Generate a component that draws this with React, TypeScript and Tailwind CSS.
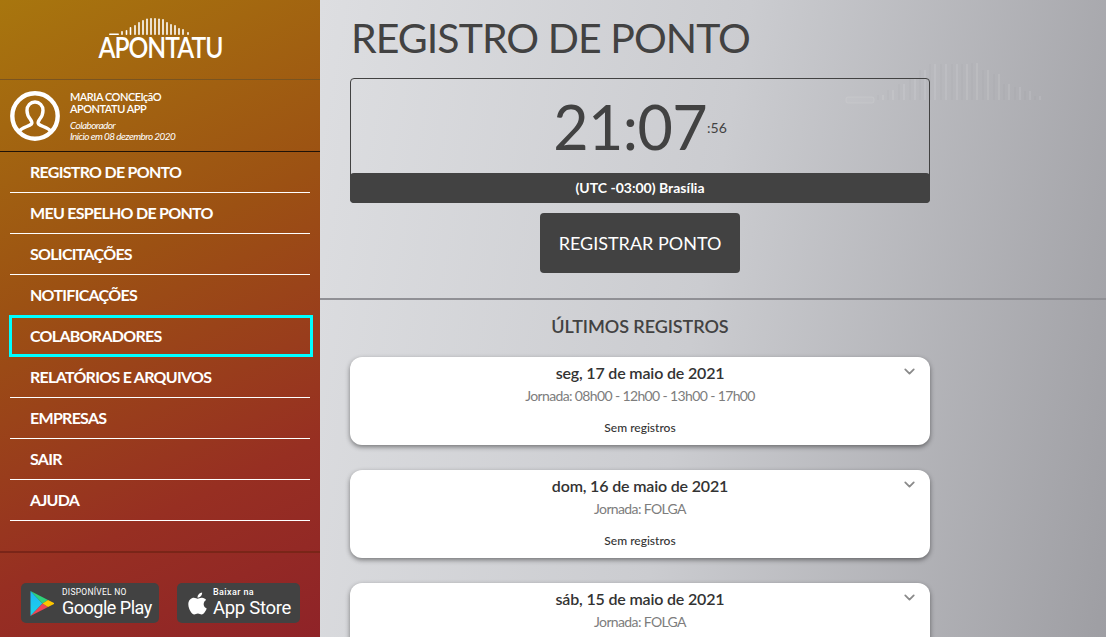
import { ChevronDown } from "lucide-react";
import { FaApple } from "react-icons/fa";

const bars: [number, number][] = [
  [121, 31],[125.5, 30],[129.5, 27],[134, 25],[138, 22],[142, 20],[146, 18.5],[150, 18],[154, 18],[158, 18.5],[162, 19],[166, 22],[170, 24],[174, 25],[178, 28],[182, 29],[187, 32],
];

const wm: [number, number][] = [
  [881, 92],[891, 87],[902, 81],[913, 76],[923, 67],[933, 61],[944, 61],[955, 61],[965, 61],[975, 60],[986, 67],[997, 71],[1007, 81],[1018, 84],[1028, 88],[1038, 93],
];

function LogoBars({ className }: { className?: string }) {
  return (
    <svg viewBox="108 17 81 19" className={className} fill="none">
      <rect x="108" y="33.5" width="10" height="1.6" rx="0.8" fill="currentColor" />
      {bars.map(([x, t]) => (
        <rect key={x} x={x - 0.8} y={t} width="1.6" height={35 - t} rx="0.8" fill="currentColor" />
      ))}
    </svg>
  );
}

function Watermark() {
  return (
    <svg viewBox="840 55 210 55" className="absolute left-[520px] top-[55px] h-[55px] w-[210px] pointer-events-none" fill="none">
      <rect x="846" y="97" width="28" height="6" rx="2" fill="#ffffff" fillOpacity="0.04" stroke="#ffffff" strokeOpacity="0.1" />
      {wm.map(([x, t]) => (
        <g key={x}>
          <path d={`M${x - 3} ${t + 3} V${100}`} stroke="#000000" strokeOpacity="0.025" strokeWidth="1" />
          <path d={`M${x + 2} ${t + 3} V${100}`} stroke="#ffffff" strokeOpacity="0.16" strokeWidth="1.2" />
        </g>
      ))}
    </svg>
  );
}

const nav = ["REGISTRO DE PONTO","MEU ESPELHO DE PONTO","SOLICITAÇÕES","NOTIFICAÇÕES","COLABORADORES","RELATÓRIOS E ARQUIVOS","EMPRESAS","SAIR","AJUDA"];

const cards: [string, string, boolean][] = [
  ["seg, 17 de maio de 2021", "Jornada: 08h00 - 12h00 - 13h00 - 17h00", true],
  ["dom, 16 de maio de 2021", "Jornada: FOLGA", true],
  ["sáb, 15 de maio de 2021", "Jornada: FOLGA", false],
];

export default function App() {
  return (
    <div className="flex h-[637px] w-[1106px] overflow-hidden font-['Lato','Noto_Sans',sans-serif] text-[#424242]">
      <aside className="flex h-full w-[320px] shrink-0 flex-col bg-[linear-gradient(155deg,#a8760e_0%,#9c5113_40%,#972f22_75%,#8f2328_100%)] text-white">
        <div className="flex h-[80px] shrink-0 flex-col items-center border-b border-[#7a5420] pt-[17px]">
          <LogoBars className="ml-[-21px] h-[19px] w-[81px] text-white" />
          <div className="mt-[-3px] origin-center scale-x-[0.88] text-[28px] font-semibold leading-[29px] tracking-[-1.1px]">APONTATU</div>
        </div>
        <div className="flex h-[72px] shrink-0 items-center border-b border-[#1f1208] pl-[10px]">
          <svg viewBox="0 0 50 50" className="h-[50px] w-[50px] shrink-0" fill="none" stroke="white">
            <circle cx="25" cy="25" r="22.7" strokeWidth="4.4" />
            <path d="M10 39.5c2-3 9-4 11.5-6.5 1-1.2 0-3-1-4.5-2.5-3-3.5-6-3.5-9 0-5 3.5-8.5 8-8.5s8 3.5 8 8.5c0 3-1 6-3.5 9-1 1.5-2 3.3-1 4.5 2.5 2.5 9.5 3.5 11.5 6.5" strokeWidth="3.4" strokeLinecap="round" />
          </svg>
          <div className="ml-[10px] mt-[1px]">
            <div className="text-[11px] font-semibold leading-[12px] tracking-[-0.5px]">MARIA CONCEIçãO</div>
            <div className="text-[11px] font-semibold leading-[12px] tracking-[-0.5px]">APONTATU APP</div>
            <div className="mt-[5px] text-[10px] italic leading-[11px] tracking-[-0.55px]">Colaborador</div>
            <div className="text-[10px] italic leading-[11px] tracking-[-0.55px]">Início em 08 dezembro 2020</div>
          </div>
        </div>
        <nav className="mx-[10px] flex shrink-0 flex-col">
          {nav.map((n) => (
            <a key={n} className="relative flex h-[41px] items-center border-b border-white pl-[20px] text-[16px] font-bold tracking-[-0.72px]">
              {n}
              {n === "COLABORADORES" && (
                <span className="absolute -left-[1px] -right-[3px] -top-[1px] bottom-[-1px] border-[3px] border-[#00ffff]" />
              )}
            </a>
          ))}
        </nav>
        <div className="mt-[30px] flex flex-1 items-start justify-between border-t-2 border-[#7a2518] pl-[21px] pr-[20px] pt-[30px]">
          <div className="flex h-[40px] w-[138px] items-center rounded-[5px] bg-[#424242] pl-[9px]">
            <svg viewBox="0 0 24 27" className="h-[27px] w-[24px]">
              <defs>
                <linearGradient id="gpb" x1="0" y1="0" x2="0" y2="1">
                  <stop offset="0" stopColor="#1fb6f5" />
                  <stop offset="1" stopColor="#1bd5e8" />
                </linearGradient>
              </defs>
              <path d="M0.5 1 L12.5 13.5 L0.5 26Z" fill="url(#gpb)" />
              <path d="M0.5 1 L18 10 L12.5 13.5Z" fill="#2fd27b" />
              <path d="M0.5 26 L18 17 L12.5 13.5Z" fill="#ee4655" />
              <path d="M18 10 L25 13.5 L18 17 L12.5 13.5Z" fill="#fdc500" />
            </svg>
            <div className="ml-[8px] mt-[-1px] font-['Roboto',sans-serif]">
              <div className="text-[8.5px] leading-[10px] tracking-[0.25px]">DISPONÍVEL NO</div>
              <div className="text-[18px] leading-[21px] tracking-[-0.5px]">Google Play</div>
            </div>
          </div>
          <div className="flex h-[40px] w-[123px] items-center rounded-[5px] bg-[#424242] pl-[9px]">
            <FaApple className="h-[25px] w-[23px] text-white" />
            <div className="ml-[4px] mt-[-1px] font-['Roboto',sans-serif]">
              <div className="text-[9px] font-medium leading-[11px] tracking-[0.4px]">Baixar na</div>
              <div className="text-[18.5px] leading-[20px] tracking-[-0.3px]">App Store</div>
            </div>
          </div>
        </div>
      </aside>
      <main className="relative h-full flex-1 overflow-hidden bg-[linear-gradient(100deg,#dddee1_0%,#cbccd0_48%,#9e9ea3_100%)]">
        <Watermark />
        <h1 className="pl-[31px] pt-[11px] text-[41px] font-normal leading-[54px] tracking-[-0.95px]">REGISTRO DE PONTO</h1>
        <div className="relative mx-[30px] mt-[13px] flex h-[125px] w-[580px] flex-col rounded-[4px] border border-[#424242]">
          <div className="flex flex-1 items-center justify-center">
            <span className="text-[61px] font-normal leading-none tracking-[-0.6px]">21:07</span>
            <span className="mt-[4px] text-[14px] leading-none">:56</span>
          </div>
          <div className="-mx-px -mb-px flex h-[30px] items-center justify-center rounded-[4px] bg-[#424242] pb-[1px] text-[14px] font-bold text-white">(UTC -03:00) Brasília</div>
        </div>
        <div className="mt-[10px] flex w-[640px] justify-center">
          <button className="flex h-[60px] w-[200px] items-center justify-center rounded-[4px] bg-[#424242] text-[18px] text-white">REGISTRAR PONTO</button>
        </div>
        <div className="mt-[25px] h-[2px] w-full bg-[#909095]" />
        <h2 className="mt-[14px] w-[640px] text-center text-[18px] font-semibold leading-[24px] tracking-[-0.07px]">ÚLTIMOS REGISTROS</h2>
        <div className="mx-[30px] mt-[19px] flex w-[580px] flex-col gap-[25px]">
          {cards.map(([d, j, more]) => (
            <div key={d} className="relative h-[88px] shrink-0 rounded-[12px] bg-white pt-[5px] text-center shadow-[0_2px_5px_rgba(0,0,0,0.45)]">
              <div className="text-[16px] font-semibold leading-[22px] tracking-[-0.17px] text-[#333]">{d}</div>
              <div className="mt-[1px] text-[14px] leading-[22px] tracking-[-0.63px] text-[#7d7d7d]">{j}</div>
              {more && <div className="mt-[12px] text-[12px] font-medium leading-[18px] text-[#333]">Sem registros</div>}
              <ChevronDown className="absolute right-[12px] top-[6px] h-[17px] w-[17px] text-[#8a8a8a]" strokeWidth={2.5} />
            </div>
          ))}
        </div>
      </main>
    </div>
  );
}
